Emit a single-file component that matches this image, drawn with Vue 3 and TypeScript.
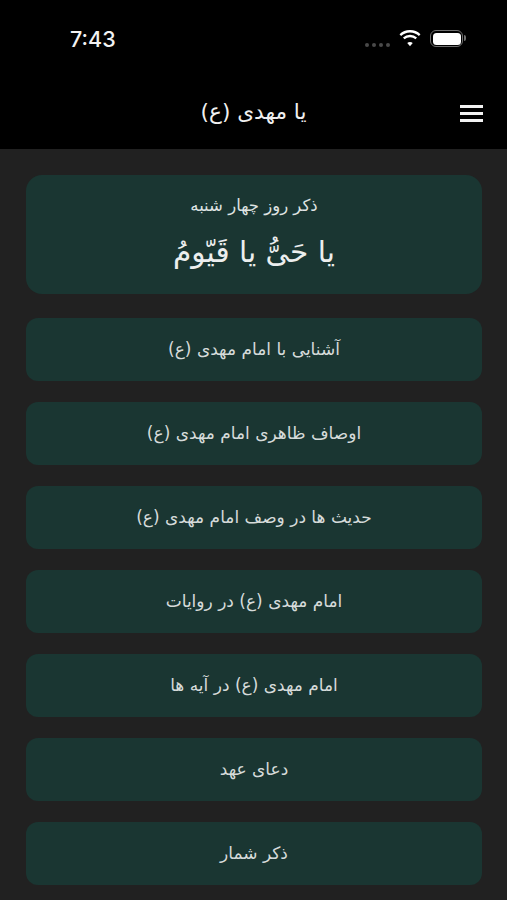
<script setup lang="ts">
const items: string[] = [
  'آشنایی با امام مهدی (ع)',
  'اوصاف ظاهری امام مهدی (ع)',
  'حدیث ها در وصف امام مهدی (ع)',
  'امام مهدی (ع) در روایات',
  'امام مهدی (ع) در آیه ها',
  'دعای عهد',
  'ذکر شمار',
]
</script>

<template>
  <div class="screen">
    <header class="top">
      <div class="status">
        <span class="time">7:43</span>
        <div class="sys">
          <span class="dots"><i></i><i></i><i></i><i></i></span>
          <svg class="wifi" width="22" height="17" viewBox="0 0 21 16">
            <path d="M10.5 2.2c3.300 0 6.300 1.300 8.500 3.400l1.500-1.700A14.400 14.400 0 0 0 10.500 0 14.400 14.400 0 0 0 .5 3.900L2 5.600a12.300 12.300 0 0 1 8.500-3.400z" fill="#fff"/>
            <path d="M10.500 6.800c2 0 3.800.8 5.200 2l1.500-1.700a9.900 9.900 0 0 0-13.400 0l1.500 1.700a7.700 7.700 0 0 1 5.200-2z" fill="#fff"/>
            <path d="M10.500 11.300c-1 0-1.900.4-2.600 1l2.600 3 2.600-3c-.7-.6-1.600-1-2.600-1z" fill="#fff"/>
          </svg>
          <span class="battery"><span class="cell"></span></span>
        </div>
      </div>
      <div class="nav">
        <h1 class="title">یا مهدی (ع)</h1>
        <span class="menu"><i></i><i></i><i></i></span>
      </div>
    </header>
    <main class="content">
      <section class="zikr">
        <p class="day">ذکر روز چهار شنبه</p>
        <p class="phrase">یا حَیُّ یا قَیّومُ</p>
      </section>
      <button v-for="item in items" :key="item" class="item" type="button">{{ item }}</button>
    </main>
  </div>
</template>

<style>
html, body { margin: 0; background: #212121; }
</style>

<style scoped>
.screen {
  width: 507px;
  height: 900px;
  overflow: hidden;
  background: #212121;
  font-family: "DejaVu Sans", "Noto Sans", sans-serif;
  color: #e6e8e7;
}
.top { background: #000; height: 149px; box-sizing: border-box; }
.status {
  height: 78px;
  display: flex;
  justify-content: space-between;
  padding: 24px 44px 0 70px;
  box-sizing: border-box;
}
.time {
  font-family: Inter, "Liberation Sans", sans-serif;
  font-size: 21.5px;
  font-weight: 500;
  line-height: 30px;
  color: #f2f2f2;
}
.sys { display: flex; align-items: flex-start; margin-top: 6px; }
.dots { display: flex; gap: 3px; margin-top: 13px; margin-right: 9px; }
.dots i { width: 4px; height: 4px; border-radius: 50%; background: #4a4a4a; }
.wifi { margin-right: 9px; }
.battery {
  position: relative;
  width: 33px;
  height: 17px;
  border: 1.5px solid #6f6f6f;
  border-radius: 6px;
  box-sizing: border-box;
  padding: 1.5px;
  display: block;
}
.battery::after {
  content: "";
  position: absolute;
  right: -4px;
  top: 4px;
  width: 2px;
  height: 6px;
  background: #6f6f6f;
  border-radius: 0 2px 2px 0;
}
.cell { display: block; height: 100%; background: #fff; border-radius: 3.5px; }
.nav {
  position: relative;
  height: 71px;
  display: flex;
  align-items: center;
  justify-content: center;
  padding-bottom: 4px;
  box-sizing: border-box;
}
.title {
  margin: 0;
  font-size: 21.6px;
  font-weight: 400;
  direction: rtl;
  color: #f0f0f0;
}
.menu {
  position: absolute;
  right: 24px;
  top: 27px;
  width: 23px;
  display: flex;
  flex-direction: column;
  gap: 4px;
}
.menu i { height: 3px; background: #f2f2f2; display: block; }
.content {
  display: flex;
  flex-direction: column;
  gap: 21px;
  padding: 26px 25px 0 26px;
}
.zikr {
  height: 119px;
  margin-bottom: 3px;
  background: #1a3632;
  border-radius: 16px;
  box-sizing: border-box;
  padding-top: 19px;
  text-align: center;
  direction: rtl;
}
.day { margin: 0; font-size: 16.5px; line-height: 24px; color: #dfe3e2; }
.phrase { margin: 10px 0 0; font-size: 29.5px; line-height: 48px; color: #eceeee; }
.item {
  height: 63px;
  border: 0;
  padding: 0 0 2px;
  border-radius: 12px;
  background: #1a3632;
  color: #d6dbda;
  font-family: inherit;
  font-size: 17px;
  direction: rtl;
  text-align: center;
}
</style>
